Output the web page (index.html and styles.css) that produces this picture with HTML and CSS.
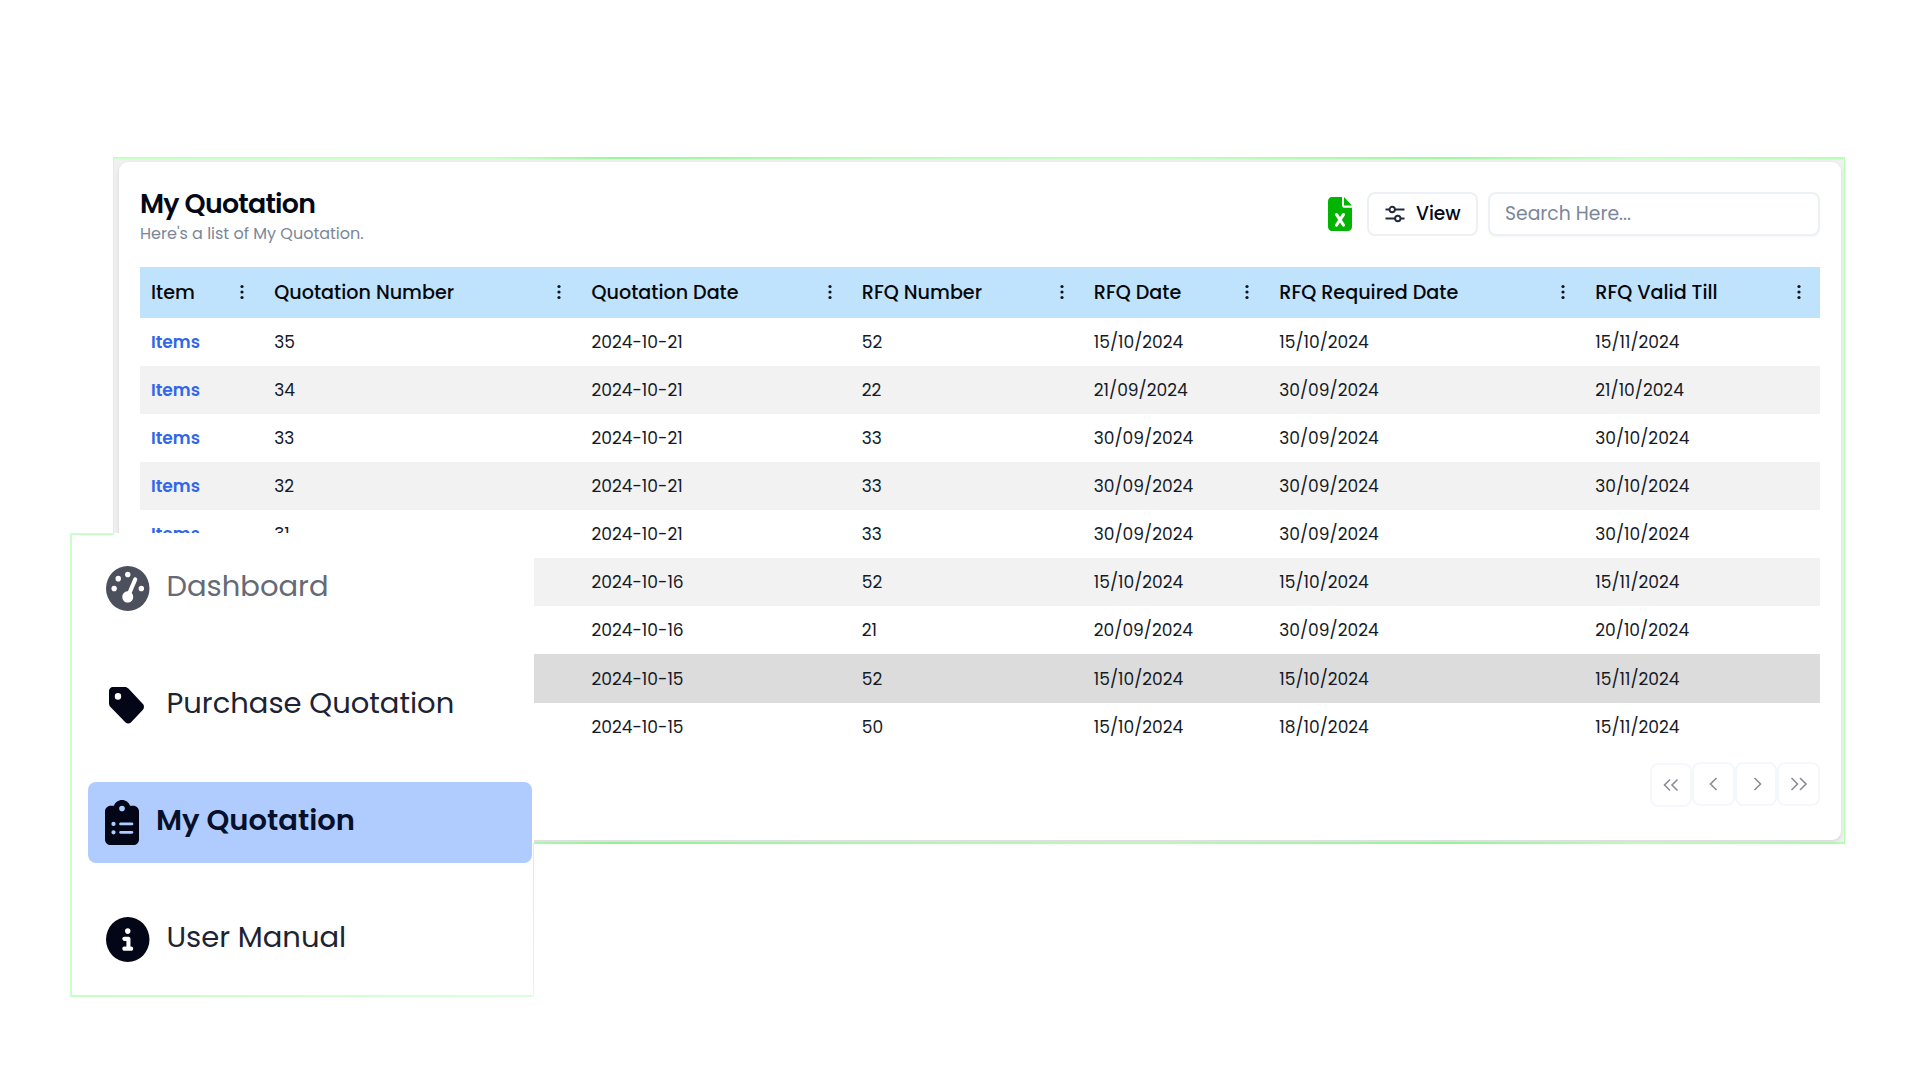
FILE: index.html
```html
<!DOCTYPE html>
<html lang="en">
<head>
<meta charset="utf-8">
<title>My Quotation</title>
<link rel="stylesheet" href="styles.css">
</head>
<body>
<main class="frame">
  <section class="card">
    <header class="card-head">
      <div class="heading">
        <h1>My Quotation</h1>
        <p>Here's a list of My Quotation.</p>
      </div>
      <div class="tools">
        <svg class="excel" viewBox="0 0 384 512" preserveAspectRatio="none"><path d="M64 0C28.7 0 0 28.7 0 64V448c0 35.3 28.7 64 64 64H320c35.3 0 64-28.7 64-64V160H256c-17.7 0-32-14.3-32-32V0H64zM256 0V128H384L256 0zM155.7 250.2L192 302.1l36.3-51.9c7.6-10.9 22.6-13.5 33.4-5.9s13.5 22.6 5.9 33.4L221.3 344l46.4 66.2c7.6 10.9 5 25.8-5.9 33.4s-25.8 5-33.4-5.9L192 385.8l-36.3 51.9c-7.6 10.9-22.6 13.5-33.4 5.9s-13.5-22.6-5.9-33.4L162.7 344l-46.4-66.2c-7.6-10.9-5-25.8 5.9-33.4s25.8-5 33.4 5.9z"/></svg>
        <button class="view">
          <svg class="mixer" viewBox="0 0 20 18"><path d="M.5 4.5h4M10 4.5h9.5M.5 13.5H10M15.5 13.5h4"/><circle cx="7.2" cy="4.5" r="2.7"/><circle cx="12.8" cy="13.5" r="2.7"/></svg>
          <span>View</span>
        </button>
        <div class="search">Search Here...</div>
      </div>
    </header>
    <div class="table">
      <div class="row head" id="head"></div>
    </div>
    <nav class="pager">
      <span class="page low"><svg viewBox="0 0 20 20"><path d="M9 4.5 3.5 10 9 15.500M16.500 4.500 11 10l5.500 5.500"/></svg></span>
      <span class="page"><svg viewBox="0 0 20 20"><path d="M12.500 4 6.500 10l6 6"/></svg></span>
      <span class="page"><svg viewBox="0 0 20 20"><path d="M8.500 4l6 6-6 6"/></svg></span>
      <span class="page"><svg viewBox="0 0 20 20"><path d="M2.500 4l6 6-6 6M11 4l6 6-6 6"/></svg></span>
    </nav>
  </section>
</main>
<aside class="sidebar">
  <a class="item muted"><svg class="round" viewBox="0 0 512 512" preserveAspectRatio="none"><path d="M0 256a256 256 0 1 1 512 0A256 256 0 1 1 0 256zM288 96a32 32 0 1 0 -64 0 32 32 0 1 0 64 0zM256 416c35.3 0 64-28.7 64-64c0-17.400-6.900-33.100-18.100-44.600L366 161.700c5.300-12.100-.2-26.300-12.300-31.600s-26.300 .2-31.600 12.300L257.900 288c-.6 0-1.300 0-1.900 0c-35.300 0-64 28.700-64 64s28.700 64 64 64zM176 144a32 32 0 1 0 -64 0 32 32 0 1 0 64 0zM96 288a32 32 0 1 0 0-64 32 32 0 1 0 0 64zm352-32a32 32 0 1 0 -64 0 32 32 0 1 0 64 0z"/></svg><span>Dashboard</span></a>
  <a class="item"><svg class="tag" viewBox="0 32 437 448" preserveAspectRatio="none"><path d="M0 80V229.500c0 17 6.700 33.300 18.700 45.300l188 188c15 15 51.500 15 66.500 0L423.700 307.300c17-17 17-55.500 0-70.500l-181-186c-12-12-28.300-18.700-45.300-18.700H48C21.500 32 0 53.500 0 80zm112 26a40 40 0 1 1 0 80 40 40 0 1 1 0-80z"/></svg><span>Purchase Quotation</span></a>
  <a class="item active"><svg class="clip" viewBox="0 0 384 512" preserveAspectRatio="none"><path d="M192 0c-41.800 0-77.400 26.700-90.500 64H64C28.700 64 0 92.700 0 128V448c0 35.300 28.700 64 64 64H320c35.300 0 64-28.700 64-64V128c0-35.300-28.700-64-64-64H282.500C269.400 26.700 233.800 0 192 0zm0 64a32 32 0 1 1 0 64 32 32 0 1 1 0-64zM72 272a24 24 0 1 1 48 0 24 24 0 1 1 -48 0zm104-16H304c8.800 0 16 7.200 16 16s-7.200 16-16 16H176c-8.800 0-16-7.200-16-16s7.200-16 16-16zM72 368a24 24 0 1 1 48 0 24 24 0 1 1 -48 0zm88 0c0-8.800 7.200-16 16-16H304c8.800 0 16 7.200 16 16s-7.200 16-16 16H176c-8.800 0-16-7.200-16-16z"/></svg><span>My Quotation</span></a>
  <a class="item"><svg class="round" viewBox="0 0 512 512" preserveAspectRatio="none"><path d="M256 512A256 256 0 1 0 256 0a256 256 0 1 0 0 512zM216 336h24V272H216c-13.300 0-24-10.700-24-24s10.700-24 24-24h48c13.300 0 24 10.700 24 24v88h8c13.300 0 24 10.700 24 24s-10.700 24-24 24H216c-13.300 0-24-10.700-24-24s10.700-24 24-24zm40-208a32 32 0 1 1 0 64 32 32 0 1 1 0-64z"/></svg><span>User Manual</span></a>
</aside>
<script src="table.js"></script>
</body>
</html>
```
FILE: styles.css
```css
* { box-sizing: border-box; }
body {
  margin: 0;
  width: 1920px;
  height: 1080px;
  overflow: hidden;
  background: #fff;
  color: #151a27;
  font-family: Poppins, Inter, "Open Sans", sans-serif;
  font-size: 17.05px;
  padding: 157px 75px 0 113px;
}
h1, p { margin: 0; }
svg { display: block; flex: none; fill: currentColor; }

.frame {
  height: 687px;
  padding: 3px 3px 4px 5px;
  border: 1px solid #c9fcc9;
  border-image: linear-gradient(90deg, #c4ffc4, #c9ffc9 22%, #96f896 29%, #b9fdb9 45%, #c4ffc4 60%, #9bfa9b 77%, #c9ffc9 88%, #b4ffb4) 2 1 2 1;
  border-width: 2px 1px;
  background: #f0f0f0;
}
.card {
  height: 678px;
  padding: 20px 21px 0;
  border-radius: 9px;
  background: #fff;
  box-shadow: 0 2px 4px rgba(0, 0, 0, .1);
}
.card-head {
  display: flex;
  justify-content: space-between;
  align-items: flex-start;
  height: 84.5px;
}
h1 {
  font-size: 26.8px;
  line-height: 36px;
  font-weight: 600;
  letter-spacing: -.72px;
  padding-top: 4px;
  color: #020817;
}
.heading p { font-size: 16px; line-height: 20px; color: #7b8798; padding-top: 2px; }
.tools { display: flex; align-items: center; padding-top: 10px; font-size: 18.8px; }
.excel { width: 24px; height: 34px; color: #00b400; margin-right: 15px; }
.view, .search {
  height: 44px;
  border: 2px solid #edf1f7;
  border-radius: 8px;
  background: #fff;
  display: flex;
  align-items: center;
}
.view {
  width: 111px;
  margin-right: 10px;
  padding: 0 0 0 16px;
  gap: 11px;
  color: #020817;
  font: 500 18.6px Poppins, Inter, sans-serif;
}
.mixer { width: 20px; height: 18px; fill: none; stroke: #252b3a; stroke-width: 1.9; }
.search { width: 332px; padding-left: 15px; color: #7b8798; box-shadow: 0 1px 2px rgba(0, 0, 0, .04); }
.view span, .search { line-height: 40px; }

.row {
  display: grid;
  grid-template-columns: 123.3px 317.200px 270.300px 232px 185.5px 316px 1fr;
  height: 48.15px;
  align-items: center;
}
.row > * { padding-left: 11px; }
.row:nth-child(odd) { background: #f2f2f2; }
.row:nth-child(even) { background: #fff; }
.row:nth-child(9) { background: #dcdcdc; }
.row.head { height: 51px; background: #bfe3fc; font-size: 19.15px; font-weight: 500; color: #06080c; }
.col { display: flex; justify-content: space-between; align-items: center; padding-right: 19px; padding-top: 1px; }
.dots { width: 4px; height: 16px; margin-bottom: 2px; fill: #10141c; }
.link { color: #2f66ec; font-weight: 600; }

.pager { display: flex; justify-content: flex-end; padding-top: 11px; }
.page {
  width: 42.6px;
  height: 44px;
  border: 2px solid #f4f7fb;
  border-radius: 8px;
  display: flex;
  align-items: center;
  justify-content: center;
}
.page.low { margin-top: 1px; }
.page svg { width: 20px; height: 20px; fill: none; stroke: #8b8d94; stroke-width: 1.6; }

.sidebar {
  position: absolute;
  left: 70px;
  top: 533px;
  width: 464px;
  height: 464px;
  padding: 15px 2px 0 16px;
  background:
    linear-gradient(#c9ffc9, #c9ffc9) 0 0 / 44px 2px no-repeat,
    linear-gradient(#c9ffc9, #c9ffc9) 0 0 / 2px 463px no-repeat,
    linear-gradient(90deg, #c4ffc4, #dcffdc) 0 462px / 464px 2px no-repeat,
    linear-gradient(#c9f9c9, #d8ffd8) 463px 310px / 1px 154px no-repeat,
    #fff;
}
.item {
  display: flex;
  align-items: center;
  height: 81px;
  margin-bottom: 36px;
  padding: 0 0 5.500px 20px;
  font-size: 29px;
  line-height: 40px;
  color: #1c2334;
}
.item svg { color: #020617; position: relative; top: 2.500px; }
.muted { color: #646a76; }
.muted svg { color: #4c505c; }
.round { width: 43.500px; height: 45px; margin-right: 17px; }
.tag { width: 35px; height: 37px; margin: 0 22.500px 0 3px; }
.clip { width: 34px; height: 45px; margin-right: 17px; }
.active {
  margin-left: 2px;
  padding-left: 17px;
  border-radius: 8px;
  background: #b0ccff;
  color: #06102a;
  font-weight: 600;
}
```
FILE: table.js
```js
const columns = ["Item", "Quotation Number", "Quotation Date", "RFQ Number", "RFQ Date", "RFQ Required Date", "RFQ Valid Till"];
const rows = [
  ["35", "2024-10-21", "52", "15/10/2024", "15/10/2024", "15/11/2024"],
  ["34", "2024-10-21", "22", "21/09/2024", "30/09/2024", "21/10/2024"],
  ["33", "2024-10-21", "33", "30/09/2024", "30/09/2024", "30/10/2024"],
  ["32", "2024-10-21", "33", "30/09/2024", "30/09/2024", "30/10/2024"],
  ["31", "2024-10-21", "33", "30/09/2024", "30/09/2024", "30/10/2024"],
  ["", "2024-10-16", "52", "15/10/2024", "15/10/2024", "15/11/2024"],
  ["", "2024-10-16", "21", "20/09/2024", "30/09/2024", "20/10/2024"],
  ["", "2024-10-15", "52", "15/10/2024", "15/10/2024", "15/11/2024"],
  ["", "2024-10-15", "50", "15/10/2024", "18/10/2024", "15/11/2024"]
];
const dots = '<svg class="dots" viewBox="0 0 4 16"><circle cx="2" cy="2.500" r="1.600"/><circle cx="2" cy="8" r="1.600"/><circle cx="2" cy="13.500" r="1.600"/></svg>';
const head = document.getElementById("head");
head.innerHTML = columns.map(c => `<div class="col"><span>${c}</span>${dots}</div>`).join("");
rows.forEach(r => {
  const row = document.createElement("div");
  row.className = "row";
  row.innerHTML = `<span class="link">${r[0] ? "Items" : ""}</span>` + r.map(v => `<span>${v}</span>`).join("");
  head.parentElement.append(row);
});
```
